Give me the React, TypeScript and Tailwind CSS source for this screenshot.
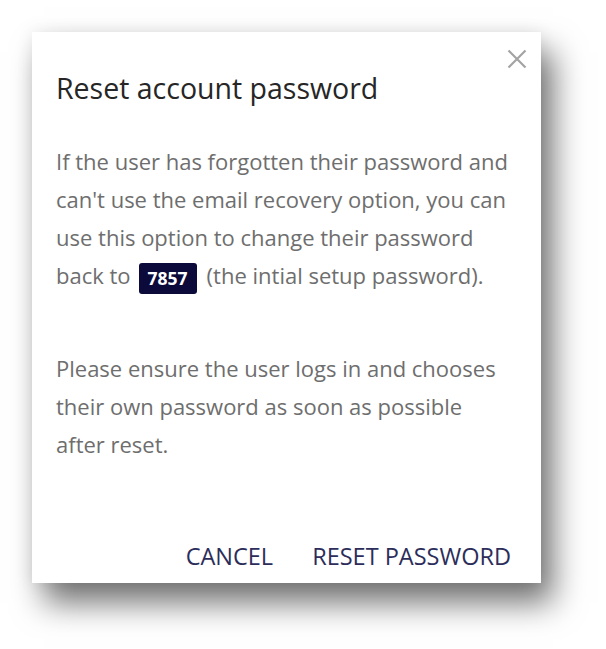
export default function App() {
  return (
    <div className="min-h-[649px] w-[606px] bg-white pl-[32px] pt-[32px] font-['Open_Sans',sans-serif]">
      <div className="relative flex h-[551px] w-[509px] flex-col bg-white shadow-[12px_20px_30px_rgba(0,0,0,0.55),0_0_16px_rgba(0,0,0,0.08)]">
        <button className="absolute right-[14px] top-[17px]">
          <svg width="20" height="20" viewBox="0 0 20 20" fill="none">
            <path d="M1.5 1.5L18.5 18.5M18.5 1.5L1.5 18.5" stroke="#a3a3a3" strokeWidth="2.2" />
          </svg>
        </button>

        <h1 className="pl-[24px] pt-[38px] text-[28.5px] leading-[36px] text-[#262626]">
          Reset account password
        </h1>

        <div className="w-[476px] pl-[24px] pt-[36px] text-[22px] leading-[38px] text-[#6e6e6e]">
          <p>
            If the user has forgotten their password and can't use the email recovery option, you can
            use this option to change their password back to
            <span className="ml-[8px] mr-[10px] inline-block h-[31px] rounded-[3px] bg-[#0b0a3a] px-[9px] align-middle text-[17.5px] font-bold leading-[31px] text-white">
              7857
            </span>
            (the intial setup password).
          </p>
          <p className="mt-[55px]">
            Please ensure the user logs in and chooses their own password as soon as possible after
            reset.
          </p>
        </div>

        <div className="mt-auto flex justify-end gap-[39px] pb-[12px] pr-[30px] text-[23.5px] leading-[30px] text-[#2c2d5a]">
          <button>CANCEL</button>
          <button>RESET PASSWORD</button>
        </div>
      </div>
    </div>
  )
}
